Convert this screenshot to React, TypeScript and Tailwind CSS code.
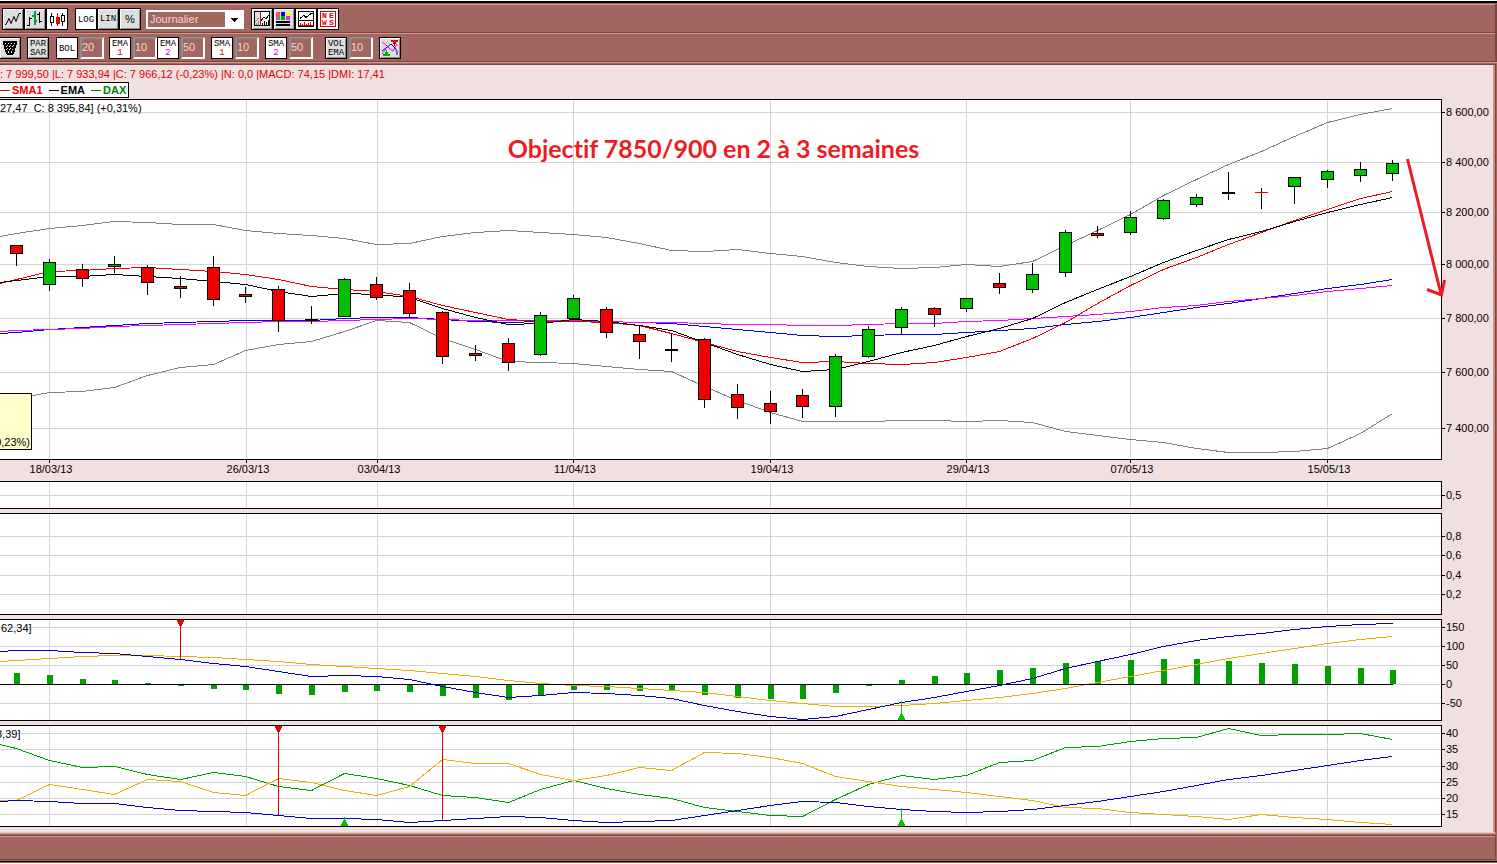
import React, { useState } from 'react';
import clsx from 'clsx';

type Candle = [high: number, top: number, bottom: number, low: number, kind: 'up' | 'down' | 'flat' | 'flatRed'];

const PLOT_WIDTH = 1441;
const GRID = '#d4d4d4';

// one x per trading day
const days = Array.from({ length: 43 }, (_, i) => Math.floor(16.5 + i * 32.77));
const weekLines = [49, 246, 377, 573, 770, 966, 1130, 1327];

const dates = [
  { x: 49, label: '18/03/13' },
  { x: 246, label: '26/03/13' },
  { x: 377, label: '03/04/13' },
  { x: 573, label: '11/04/13' },
  { x: 770, label: '19/04/13' },
  { x: 966, label: '29/04/13' },
  { x: 1130, label: '07/05/13' },
  { x: 1327, label: '15/05/13' }
];

const candles: Candle[] = [
  [245, 245, 253, 266, 'down'], [259, 262, 284, 291, 'up'], [264, 269, 278, 287, 'down'],
  [256, 264, 266, 273, 'up'], [265, 267, 282, 295, 'down'], [276, 286, 288, 298, 'down'],
  [256, 267, 299, 306, 'down'], [287, 294, 296, 303, 'down'], [286, 289, 320, 332, 'down'],
  [306, 319, 320, 324, 'flat'], [278, 279, 316, 317, 'up'], [277, 284, 297, 300, 'down'],
  [283, 290, 313, 317, 'down'], [311, 312, 356, 364, 'down'], [345, 353, 355, 361, 'down'],
  [338, 343, 362, 371, 'down'], [312, 315, 354, 356, 'up'], [295, 298, 318, 320, 'up'],
  [307, 309, 332, 338, 'down'], [325, 334, 341, 359, 'down'], [334, 349, 350, 362, 'flat'],
  [338, 339, 399, 408, 'down'], [384, 394, 407, 419, 'down'], [391, 403, 411, 424, 'down'],
  [389, 395, 406, 418, 'down'], [354, 356, 406, 417, 'up'], [326, 329, 356, 358, 'up'],
  [307, 309, 327, 334, 'up'], [307, 308, 314, 327, 'down'], [298, 298, 308, 312, 'up'],
  [273, 283, 287, 294, 'down'], [263, 274, 289, 293, 'up'], [230, 232, 272, 277, 'up'],
  [226, 233, 235, 238, 'down'], [211, 217, 232, 235, 'up'], [199, 200, 218, 220, 'up'],
  [194, 197, 204, 207, 'up'], [172, 192, 193, 200, 'flat'], [188, 192, 192, 209, 'flatRed'],
  [177, 177, 186, 204, 'up'], [170, 171, 179, 188, 'up'], [162, 169, 175, 182, 'up'],
  [160, 163, 173, 181, 'up']
];

const bollingerUpper = [233, 228, 225, 221, 222, 224, 224, 230, 233, 235, 238, 244, 243, 236, 232, 230, 232, 234, 237, 243, 250, 251, 249, 253, 256, 262, 266, 268, 267, 264, 266, 261, 245, 230, 214, 195, 179, 164, 151, 136, 122, 114, 108];
const bollingerLower = [398, 392, 391, 387, 375, 367, 364, 350, 344, 341, 331, 320, 322, 338, 349, 361, 362, 363, 366, 369, 371, 386, 400, 412, 421, 421, 421, 420, 420, 421, 420, 422, 431, 435, 439, 442, 448, 452, 452, 451, 448, 433, 413];
const sma = [279, 271, 270, 268, 267, 269, 271, 274, 279, 286, 289, 291, 296, 305, 312, 319, 321, 321, 322, 325, 333, 342, 351, 357, 362, 361, 363, 364, 362, 357, 351, 338, 322, 303, 285, 269, 257, 244, 232, 220, 209, 198, 191];
const ema = [280, 276, 276, 274, 276, 278, 281, 284, 291, 296, 293, 294, 297, 308, 317, 324, 323, 319, 321, 325, 330, 342, 354, 364, 371, 369, 361, 352, 345, 336, 328, 318, 302, 289, 276, 262, 250, 239, 231, 221, 212, 204, 197];
const smaLong = [332, 329, 327, 325, 323, 322, 321, 320, 320, 320, 318, 317, 317, 319, 321, 322, 321, 321, 321, 322, 323, 326, 329, 332, 335, 336, 335, 334, 334, 332, 330, 328, 324, 321, 317, 312, 307, 303, 298, 293, 288, 284, 279];
const emaLong = [330, 329, 328, 326, 325, 324, 323, 322, 321, 321, 320, 319, 318, 319, 320, 320, 320, 320, 321, 322, 322, 323, 324, 324, 325, 325, 324, 323, 323, 321, 320, 318, 316, 314, 311, 307, 305, 301, 298, 295, 291, 288, 285];

const macd = [650, 650, 652, 653, 656, 659, 663, 666, 671, 676, 675, 676, 679, 686, 692, 697, 695, 692, 693, 695, 698, 705, 711, 716, 719, 716, 709, 702, 697, 691, 685, 678, 668, 661, 654, 646, 640, 636, 633, 629, 626, 624, 623];
const macdSignal = [660, 658, 656, 655, 655, 656, 657, 659, 661, 664, 666, 668, 670, 673, 676, 680, 683, 685, 686, 688, 690, 692, 696, 700, 703, 706, 706, 705, 703, 700, 697, 693, 688, 682, 676, 670, 664, 658, 653, 648, 643, 639, 636];
const histogram = [673, 675, 679, 680, 683, 686, 689, 690, 694, 695, 692, 691, 692, 696, 698, 700, 695, 690, 690, 691, 690, 695, 698, 699, 699, 693, 686, 680, 676, 673, 670, 668, 663, 661, 660, 659, 659, 661, 663, 664, 666, 668, 670];

const diPlus = [748, 760, 767, 766, 774, 779, 772, 776, 786, 790, 773, 778, 785, 795, 797, 802, 789, 780, 788, 794, 798, 807, 811, 815, 816, 799, 784, 775, 779, 775, 762, 760, 747, 746, 741, 738, 737, 728, 735, 734, 734, 733, 739];
const diMinus = [800, 784, 789, 794, 779, 781, 792, 795, 778, 782, 790, 795, 786, 759, 763, 763, 774, 780, 775, 767, 770, 752, 753, 757, 763, 776, 781, 786, 789, 792, 796, 800, 807, 808, 812, 814, 816, 819, 814, 817, 819, 822, 824];
const adx = [800, 801, 803, 803, 807, 810, 811, 812, 815, 818, 818, 819, 822, 820, 818, 816, 817, 820, 822, 821, 820, 815, 810, 805, 801, 802, 806, 809, 811, 812, 811, 809, 805, 801, 796, 791, 785, 779, 775, 770, 765, 760, 756];

const toPoints = (start: number, values: number[]) =>
  [`0,${start + 0.5}`, ...values.map((y, i) => `${days[i] + 0.5},${y + 0.5}`)].join(' ');

const Series = ({ start, values, color }: { start: number; values: number[]; color: string }) => (
  <polyline points={toPoints(start, values)} fill="none" stroke={color} strokeWidth={1} />
);

const CandleMark = ({ x, candle }: { x: number; candle: Candle }) => {
  const [high, top, bottom, low, kind] = candle;
  if (kind === 'flat' || kind === 'flatRed') {
    return (
      <g>
        <rect x={x} y={high} width={1} height={low - high} fill="#000" />
        <rect x={x - 6} y={top} width={13} height={bottom - top + 1} fill={kind === 'flat' ? '#000' : '#f00000'} />
      </g>
    );
  }
  return (
    <g>
      <rect x={x} y={high} width={1} height={low - high} fill="#000" />
      <rect
        x={x - 5.5}
        y={top + 0.5}
        width={12}
        height={bottom - top}
        fill={kind === 'up' ? '#00c000' : '#f00000'}
        stroke="#000"
      />
    </g>
  );
};

const SellSignal = ({ x, top, end }: { x: number; top: number; end: number }) => (
  <g fill="#e60000">
    <rect x={x} y={top} width={1} height={end - top} />
    <path d={`M${x - 3} ${top}h7v2h-1v2h-1v2h-1v1h-1v-1h-1v-2h-1v-2h-1z`} />
  </g>
);

const BuySignal = ({ x, top, bottom }: { x: number; top: number; bottom: number }) => (
  <g fill="#00c800">
    <rect x={x} y={top} width={1} height={bottom - top} />
    <path d={`M${x - 3} ${bottom}v-2h1v-2h1v-2h3v2h1v2h1v2z`} />
  </g>
);

interface PaneProps {
  top: number;
  height: number;
  svgClass: string;
  ticks: { y: number; label: string }[];
  overlay?: React.ReactNode;
  children?: React.ReactNode;
}

// Plot on the left stretches with the window, value axis on the right keeps its width
const Pane = ({ top, height, svgClass, ticks, overlay, children }: PaneProps) => (
  <div className="flex">
    <div className="relative z-10 flex-1 border-y border-r border-black bg-white">
      <svg
        className={clsx('block w-full overflow-visible', svgClass)}
        viewBox={`0 ${top} ${PLOT_WIDTH} ${height}`}
        preserveAspectRatio="none"
        shapeRendering="crispEdges"
      >
        {ticks.map((t) => (
          <rect key={t.y} x={0} y={t.y} width={PLOT_WIDTH} height={1} fill={GRID} />
        ))}
        {weekLines.map((x) => (
          <rect key={x} x={x} y={top} width={1} height={height} fill={GRID} />
        ))}
        {children}
      </svg>
      {overlay}
    </div>
    <svg className="mt-px block w-[51px] shrink-0 overflow-visible text-[11px]" height={height}>
      {ticks.map((t) => (
        <g key={t.y}>
          <rect x={0} y={t.y - top} width={3} height={1} fill="#000" />
          <text x={4} y={t.y - top + 4}>{t.label}</text>
        </g>
      ))}
    </svg>
  </div>
);

interface ToolButtonProps {
  label: string;
  active?: boolean;
  onClick?: () => void;
  children: React.ReactNode;
}

const ToolButton = ({ label, active, onClick, children }: ToolButtonProps) => (
  <button
    type="button"
    aria-label={label}
    onClick={onClick}
    className={clsx(
      'flex size-[22px] shrink-0 flex-col items-center justify-center overflow-hidden border border-black font-["Liberation_Mono",monospace] text-[9px] leading-[9px] text-black',
      active ? 'bg-white' : 'bg-[#dedede] shadow-[inset_1px_1px_0_#fff,inset_-1px_-1px_0_#909090]'
    )}
  >
    {children}
  </button>
);

const Icon = ({ children }: { children: React.ReactNode }) => (
  <svg className="block size-5" viewBox="0 0 20 20" fill="none" stroke="#000" shapeRendering="crispEdges">
    {children}
  </svg>
);

const PeriodInput = ({ label, initial }: { label: string; initial: string }) => {
  const [value, setValue] = useState(initial);
  return (
    <input
      aria-label={label}
      value={value}
      onChange={(e) => setValue(e.target.value)}
      className="ml-0.5 h-[22px] w-6 border-2 border-t-[#8c8c8c] border-r-white border-b-white border-l-[#8c8c8c] bg-[#a0665f] pb-0.5 text-[11px] text-[#f5d5d0] outline-none"
    />
  );
};

const averages = [
  { name: 'EMA', index: '1', period: '10', color: 'text-[#e00000]', gap: 'ml-[5px]' },
  { name: 'EMA', index: '2', period: '50', color: 'text-[#c000c0]', gap: '' },
  { name: 'SMA', index: '1', period: '10', color: 'text-[#e00000]', gap: 'ml-1.5' },
  { name: 'SMA', index: '2', period: '50', color: 'text-[#c000c0]', gap: 'ml-1.5' }
];

const legend = [
  { name: 'SMA1', color: 'text-[#f00000]' },
  { name: 'EMA', color: 'text-black' },
  { name: 'DAX', color: 'text-[#008000]' }
];

const App: React.FC = () => {
  const [chartType, setChartType] = useState('candles');
  const [scale, setScale] = useState('log');
  const [period, setPeriod] = useState('Journalier');

  return (
    <div className='bg-white pt-px font-["Liberation_Sans",Arial,sans-serif] text-[11px] text-black'>
      <div className="border-t-2 border-black bg-[#a0665f]">
        <div className="border-r-2 border-[#7a463f]">
          {/* Chart type, scale and period */}
          <div className="mt-px flex h-[29px] items-start border-t border-b border-t-[#e0948a] border-b-[#7a463f] pt-[3px] pl-0.5">
            <ToolButton label="Ligne" active={chartType === 'line'} onClick={() => setChartType('line')}>
              <Icon>
                <path d="M2 15.500h1l3-6 2 5 3-7 2 5 3-8h2" shapeRendering="auto" />
              </Icon>
            </ToolButton>
            <ToolButton label="Barres" active={chartType === 'bars'} onClick={() => setChartType('bars')}>
              <Icon>
                <path d="M4.500 8v9M2 16.500h2M5 9.500h2M14.500 3v11M12 5.500h2M15 12.500h2" />
                <path d="M9.500 2v14M7 6.500h2M10 11.500h2" stroke="#00a040" strokeWidth="2" />
              </Icon>
            </ToolButton>
            <ToolButton label="Chandeliers" active={chartType === 'candles'} onClick={() => setChartType('candles')}>
              <Icon>
                <path d="M4.500 4v3M4.500 14v3M3.500 7.500h3v6h-3zM15.500 4v2M15.500 13v4M14.500 6.500h3v6h-3z" />
                <path d="M10.500 4v13M9.500 8.500h3v6h-3z" fill="#e00000" stroke="#e00000" />
              </Icon>
            </ToolButton>
            <div className="ml-[7px] flex">
              <ToolButton label="Logarithmique" active={scale === 'log'} onClick={() => setScale('log')}>
                <span className="mt-0.5">LOG</span>
              </ToolButton>
              <ToolButton label="Linéaire" active={scale === 'lin'} onClick={() => setScale('lin')}>LIN</ToolButton>
              <ToolButton label="Pourcentage" active={scale === 'pct'} onClick={() => setScale('pct')}>
                <span className='font-["Liberation_Sans",sans-serif] text-[11px]'>%</span>
              </ToolButton>
            </div>
            <div className="relative ml-[5px] mt-0.5 w-[98px]">
              <select
                aria-label="Période"
                value={period}
                onChange={(e) => setPeriod(e.target.value)}
                className="block h-[19px] w-full appearance-none border-2 border-white bg-[#a0665f] pl-0.5 text-[11px] leading-[15px] text-[#f5d5d0] outline-none"
              >
                <option>Journalier</option>
                <option>Hebdomadaire</option>
                <option>Mensuel</option>
              </select>
              <svg className="pointer-events-none absolute top-0 right-0 h-[19px] w-[19px] bg-white" viewBox="0 0 19 19" shapeRendering="crispEdges">
                <path d="M6 8h7v1h-1v1h-1v1h-1v1h-1v-1h-1v-1h-1v-1h-1z" />
              </svg>
            </div>
            <div className="ml-[7px] flex">
              <ToolButton label="Curseur">
                <Icon>
                  <rect x="8" y="3" width="9" height="14" fill="#fff" stroke="none" />
                  <path d="M2.500 2.500h15v14h-15zM9 12l3-4 2 2 3-4M10.500 14v3M12.500 12v5M14.500 13v4M16.500 11v5" />
                  <path d="M3 13l4-4M4.500 14v2M6.500 12v4" stroke="#888" />
                  <path d="M8.500 3v14" stroke="#e00000" />
                </Icon>
              </ToolButton>
              <ToolButton label="Couleurs">
                <Icon>
                  <g stroke="none">
                    <rect x="2" y="3" width="4" height="4" fill="#ff5050" />
                    <rect x="7" y="3" width="4" height="4" fill="#0000e0" />
                    <rect x="12" y="3" width="4" height="4" fill="#ffff00" />
                    <rect x="2" y="7" width="4" height="4" fill="#888888" />
                    <rect x="7" y="7" width="4" height="4" fill="#00b000" />
                    <rect x="12" y="7" width="4" height="4" fill="#f020f0" />
                    <path d="M2 12h14v2h-14zM2 15h14v2h-14z" fill="#000" />
                  </g>
                </Icon>
              </ToolButton>
              <ToolButton label="Indicateurs" active>
                <Icon>
                  <path d="M2.500 2.500h15v15h-15zM2 11.500h16M4 9.500l4-3 2 2 5-4h2" />
                  <path d="M3 16.500h14M4.500 14v3M6.500 15v2M8.500 13v4M10.500 15v2M12.500 14v3M14.500 13v4" stroke="#e00000" />
                </Icon>
              </ToolButton>
              <ToolButton label="News" active>
                <span className="grid size-4 grid-cols-2 border border-[#e00000] text-center text-[8px] leading-[7px] font-bold text-[#e00000]">
                  <span>N</span>
                  <span>E</span>
                  <span>W</span>
                  <span>S</span>
                </span>
              </ToolButton>
            </div>
          </div>

          {/* Indicators and their periods */}
          <div className="flex h-[29px] items-start border-t border-b border-t-[#e0948a] border-b-[#7a463f] pt-[3px]">
            <div className="-ml-px flex">
              <ToolButton label="Filtre">
                <Icon>
                  <path d="M3 3h14v3l-1 2-1 5-2 4h-6l-2-4-1-5-1-2z" fill="#000" stroke="none" />
                  <path d="M5 5.500h11M6 8.500h9M6 11.500h8M8 14.500h5" stroke="#fff" strokeDasharray="1 2" />
                  <path d="M7 7h7M7 10h6M8 13h5" stroke="#dedede" strokeDasharray="1 2" />
                </Icon>
              </ToolButton>
            </div>
            <div className="ml-1.5">
              <ToolButton label="Parabolique SAR">
                <span className="mt-0.5">PAR</span>
                <span>SAR</span>
              </ToolButton>
            </div>
            <div className="ml-[7px] flex">
              <ToolButton label="Bollinger" active>
                <span className="mt-0.5">BOL</span>
              </ToolButton>
              <PeriodInput label="Période Bollinger" initial="20" />
            </div>
            {averages.map((avg) => (
              <div key={avg.name + avg.index} className={clsx('flex', avg.gap)}>
                <ToolButton label={`${avg.name} ${avg.index}`} active>
                  <span className="mt-0.5">{avg.name}</span>
                  <span className={avg.color}>{avg.index}</span>
                </ToolButton>
                <PeriodInput label={`Période ${avg.name} ${avg.index}`} initial={avg.period} />
              </div>
            ))}
            <div className="ml-3 flex">
              <ToolButton label="Volume EMA">
                <span className="mt-0.5">VOL</span>
                <span>EMA</span>
              </ToolButton>
              <PeriodInput label="Période volume" initial="10" />
            </div>
            <div className="ml-1.5">
              <ToolButton label="Signaux">
                <Icon>
                  <g shapeRendering="auto">
                    <path d="M2 4l4 3 4 4 3 2 4-7M2 16l4-5" stroke="#f000f0" />
                    <path d="M2 13l4-3 5-4 4 4 2 3v4" stroke="#0000d0" />
                  </g>
                  <path d="M11 2h7v2h-2v2h-1v2h-1v-2h-1v-2h-2z" fill="#e00000" stroke="none" />
                  <path d="M3 18v-2h2v-2h1v-2h1v2h1v2h2v2z" fill="#00b000" stroke="none" />
                </Icon>
              </ToolButton>
            </div>
          </div>
        </div>

        {/* Chart panel */}
        <div className="border-t border-[#e0948a] pr-px">
          <div className="mt-px border-t border-r border-[#7a463f] bg-[#f0e0e0]">
            <div className="border-r-2 border-[#d98a80] pb-[5px]">
              <p className="h-[17px] overflow-hidden pt-px leading-4 whitespace-nowrap text-[#e00000]">
                : 7 999,50 |L: 7 933,94 |C: 7 966,12 (-0,23%) |N: 0,0 |MACD: 74,15 |DMI: 17,41
              </p>
              <ul className="mb-px flex h-4 w-[129px] items-center gap-1.5 border border-l-0 border-black bg-white font-bold">
                {legend.map((item) => (
                  <li key={item.name} className={clsx('flex items-center gap-0.5', item.color)}>
                    <span className="h-px w-2.5 bg-current" />
                    {item.name}
                  </li>
                ))}
              </ul>

              <Pane
                top={100}
                height={359}
                svgClass="h-[359px]"
                ticks={[
                  { y: 112, label: '8 600,00' },
                  { y: 162, label: '8 400,00' },
                  { y: 212, label: '8 200,00' },
                  { y: 264, label: '8 000,00' },
                  { y: 318, label: '7 800,00' },
                  { y: 372, label: '7 600,00' },
                  { y: 428, label: '7 400,00' }
                ]}
                overlay={
                  <>
                    <span className="absolute top-0 left-0 leading-4 whitespace-pre">{'27,47  C: 8 395,84] (+0,31%)'}</span>
                    <p className='absolute inset-x-0 top-8 pr-3.5 text-center font-["Lato",sans-serif] text-[25px] leading-8 font-bold text-[#ed1c24] [font-variant-ligatures:none]'>
                      Objectif 7850/900 en 2 à 3 semaines
                    </p>
                    <div className="absolute bottom-[9px] left-0 flex h-[57px] w-8 items-end justify-end overflow-hidden border border-l-0 border-black bg-[#ffffcc]">
                      <span className="pr-px leading-[14px]">0,23%)</span>
                    </div>
                  </>
                }
              >
                <Series start={236} values={bollingerUpper} color="#808080" />
                <Series start={402} values={bollingerLower} color="#808080" />
                <Series start={333} values={smaLong} color="#0000f0" />
                <Series start={331} values={emaLong} color="#ff00ff" />
                <Series start={283} values={sma} color="#f00000" />
                <Series start={282} values={ema} color="#000" />
                {candles.map((c, i) => (
                  <CandleMark key={i} x={days[i]} candle={c} />
                ))}
                <path
                  d="M1407.500 159L1441 294M1427 289.500L1441.500 295L1444.500 280"
                  fill="none"
                  stroke="#ed1c24"
                  strokeWidth={3}
                  shapeRendering="auto"
                />
              </Pane>

              <div className="mr-[52px]">
                <svg className="block h-[21px] w-full overflow-visible">
                  {dates.map((d) => (
                    <g key={d.x}>
                      <rect
                        x={`${((d.x / PLOT_WIDTH) * 100).toFixed(3)}%`}
                        y={0}
                        width={1}
                        height={3}
                        shapeRendering="crispEdges"
                      />
                      <text x={`${(((d.x + 2) / PLOT_WIDTH) * 100).toFixed(3)}%`} y={13} textAnchor="middle">
                        {d.label}
                      </text>
                    </g>
                  ))}
                </svg>
              </div>

              <div className="space-y-1">
                <Pane top={482} height={26} svgClass="h-[26px]" ticks={[{ y: 495, label: '0,5' }]} />
                <Pane
                  top={514}
                  height={100}
                  svgClass="h-[100px]"
                  ticks={[
                    { y: 536, label: '0,8' },
                    { y: 555, label: '0,6' },
                    { y: 575, label: '0,4' },
                    { y: 594, label: '0,2' }
                  ]}
                />
                <Pane
                  top={620}
                  height={100}
                  svgClass="h-[100px]"
                  ticks={[
                    { y: 627, label: '150' },
                    { y: 646, label: '100' },
                    { y: 665, label: '50' },
                    { y: 684, label: '0' },
                    { y: 703, label: '-50' }
                  ]}
                  overlay={<span className="absolute top-0 left-0 pl-px leading-4">62,34]</span>}
                >
                  {histogram.map((y, i) => (
                    <rect key={i} x={days[i] - 2} y={Math.min(y, 684)} width={6} height={Math.abs(y - 684)} fill="#00a000" />
                  ))}
                  <Series start={661} values={macdSignal} color="#f0b000" />
                  <rect x={0} y={684} width={1393} height={1} fill="#000" />
                  <Series start={651} values={macd} color="#0000c8" />
                  <SellSignal x={180} top={620} end={659} />
                  <BuySignal x={901} top={701} bottom={720} />
                </Pane>
                <Pane
                  top={726}
                  height={100}
                  svgClass="h-[100px]"
                  ticks={[
                    { y: 733, label: '40' },
                    { y: 749, label: '35' },
                    { y: 766, label: '30' },
                    { y: 782, label: '25' },
                    { y: 798, label: '20' },
                    { y: 814, label: '15' }
                  ]}
                  overlay={<span className="absolute top-0 left-0 -ml-1 leading-4">3,39]</span>}
                >
                  <Series start={744} values={diPlus} color="#00a000" />
                  <Series start={800} values={diMinus} color="#f0b000" />
                  <Series start={801} values={adx} color="#0000c8" />
                  <SellSignal x={278} top={726} end={815} />
                  <SellSignal x={442} top={726} end={820} />
                  <BuySignal x={344} top={817} bottom={826} />
                  <BuySignal x={901} top={808} bottom={826} />
                </Pane>
              </div>
            </div>
            <div className="h-px bg-[#d0d8dc]" />
          </div>
        </div>

        <footer className="mr-px border-t border-[#d98a80] pt-px">
          <div className="border-t border-r border-b border-[#7a463f]">
            <div className="h-[23px] border-t border-[#e0948a]" />
          </div>
        </footer>
        <div className="mt-px h-px bg-black" />
        <div className="h-px" />
      </div>
    </div>
  );
};

export default App;
